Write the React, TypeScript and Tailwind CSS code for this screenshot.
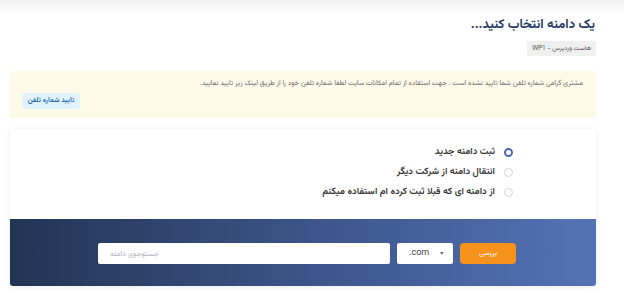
import { useState } from "react";

const options = [
  "ثبت دامنه جدید",
  "انتقال دامنه از شرکت دیگر",
  "از دامنه ای که قبلا ثبت کرده ام استفاده میکنم",
];

export default function App() {
  const [selected, setSelected] = useState(0);

  return (
    <div
      dir="rtl"
      className="min-h-[301px] w-full bg-[linear-gradient(#f1f1f1,#ffffff_14px)] font-['Vazirmatn','DejaVu_Sans',sans-serif]"
    >
      <div className="pl-[10px] pr-[28px] pt-[15px]">
        <h1 className="pr-[1px] text-[13px] font-bold leading-[20px] text-[#2a3b63]">
          یک دامنه انتخاب کنید...
        </h1>

        <div className="mt-[6px] flex">
          <span className="rounded-[2px] bg-[#f0f0f0] px-[5px] text-[6.5px] leading-[15px] text-[#555]">
            هاست وردپرس - WP1
          </span>
        </div>

        {/* alert */}
        <div className="mt-[15px] rounded-[3px] bg-[#fefaea] pb-[9px] pl-[12px] pr-[13px] pt-[7px]">
          <p className="text-[7px] leading-[12px] text-[#666]">
            مشتری گرامی شماره تلفن شما تایید نشده است . جهت استفاده از تمام امکانات سایت لطفا شماره تلفن خود را از طریق لینک زیر تایید نمایید.
          </p>
          <div className="mt-[3px] flex justify-end">
            <button className="h-[16px] w-[58px] rounded-[4px] bg-[#e0f3fc] text-[7px] font-semibold text-[#1f6aa5]">
              تایید شماره تلفن
            </button>
          </div>
        </div>

        {/* domain card */}
        <div className="mt-[11px] overflow-hidden rounded-[3px] bg-white shadow-[0_1px_6px_rgba(0,0,0,0.08)]">
          <div className="flex flex-col gap-[1px] pb-[17px] pr-[83px] pt-[14px]">
            {options.map((label, i) => (
              <label
                key={label}
                onClick={() => setSelected(i)}
                className="flex h-[19px] cursor-pointer items-center gap-[9px]"
              >
                {selected === i ? (
                  <span className="h-[9px] w-[9px] rounded-full border-[2.5px] border-[#4a67ad] bg-white" />
                ) : (
                  <span className="h-[9px] w-[9px] rounded-full border border-[#d4d4d4] bg-white" />
                )}
                <span className="text-[9.5px] font-semibold text-[#333]">{label}</span>
              </label>
            ))}
          </div>

          <div className="flex items-center gap-[7px] bg-[linear-gradient(90deg,#233453,#3b5488_50%,#5473b6)] pb-[22px] pl-[88px] pr-[80px] pt-[24px]">
            <button className="h-[21px] w-[56px] shrink-0 rounded-[4px] bg-[#f7931d] text-[7.5px] text-white">
              بررسی
            </button>
            <div
              dir="ltr"
              className="flex h-[21px] w-[56px] shrink-0 items-center rounded-[2px] bg-white pl-[12px] text-[9px] text-[#444]"
            >
              <span>.com</span>
              <span className="ml-[11px] text-[6px] text-[#666]">▾</span>
            </div>
            <input
              placeholder="جستوجوی دامنه"
              className="h-[21px] flex-1 rounded-[2px] bg-white px-[12px] text-left text-[7.5px] text-[#333] outline-none placeholder:text-[#aab0bb]"
            />
          </div>
        </div>
      </div>
    </div>
  );
}
